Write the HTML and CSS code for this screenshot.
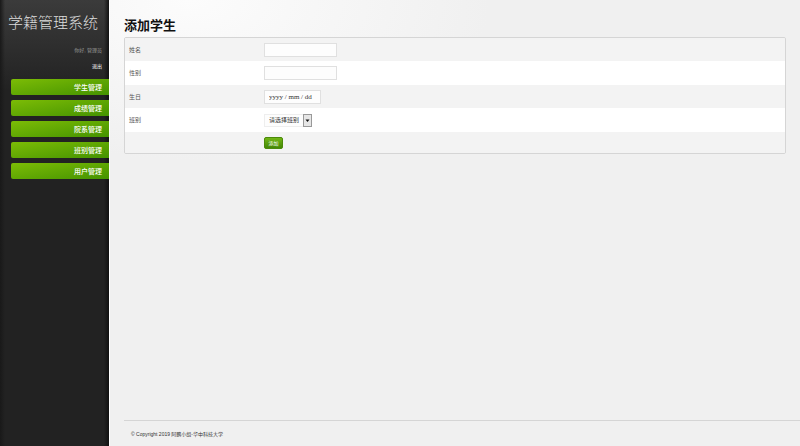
FILE: index.html
```
<!DOCTYPE html>
<html lang="zh-CN">
<head>
    <meta charset="UTF-8">
    <meta name="viewport" content="width=device-width, initial-scale=1.0">
    <title>学籍管理系统</title>
    <link rel="stylesheet" href="styles.css">
</head>
<body>
    <div class="page">
        <aside class="sidebar">
            <h1 class="logo">学籍管理系统</h1>
            <p class="hello">你好, 管理员</p>
            <a class="logout" href="#">退出</a>
            <nav class="menu">
                <a href="#">学生管理</a>
                <a href="#">成绩管理</a>
                <a href="#">院系管理</a>
                <a href="#">班别管理</a>
                <a href="#">用户管理</a>
            </nav>
        </aside>
        <main class="content">
            <h2 class="title">添加学生</h2>
            <form class="box">
                <table class="formTable">
                    <tr>
                        <th><label for="name">姓名</label></th>
                        <td><input type="text" id="name" name="name" class="field"></td>
                    </tr>
                    <tr>
                        <th><label for="sex">性别</label></th>
                        <td><input type="text" id="sex" name="sex" class="field"></td>
                    </tr>
                    <tr>
                        <th><label for="birthday">生日</label></th>
                        <td><input type="text" id="birthday" name="birthday" class="field date" placeholder="yyyy / mm / dd"></td>
                    </tr>
                    <tr>
                        <th><label for="class">班别</label></th>
                        <td>
                            <div class="selectWrap">
                                <select id="class" name="class">
                                    <option>请选择班别</option>
                                </select>
                                <svg class="arrow" viewBox="0 0 9 13" aria-hidden="true">
                                    <rect x="0.5" y="0.5" width="8" height="12" fill="#e6e6e6" stroke="#999"/>
                                    <path d="M2.5 5.5h4l-2 2.5z" fill="#111"/>
                                </svg>
                            </div>
                        </td>
                    </tr>
                    <tr class="buttonRow">
                        <th></th>
                        <td><button type="submit" class="add">添加</button></td>
                    </tr>
                </table>
            </form>
            <footer class="footer">© Copyright 2019 阿鹏小组-华中科技大学</footer>
        </main>
    </div>
</body>
</html>
```
FILE: styles.css
```
*{
    box-sizing: border-box;
    font-family: "Liberation Sans", "Noto Sans CJK SC", sans-serif;
}
body{
    margin: 0;
    background-color: #f0f0f0;
}
.page{
    display: flex;
    min-height: 100vh;
}

/* sidebar */
.sidebar{
    display: flex;
    flex-direction: column;
    flex: none;
    width: 110px;
    padding: 12px 0 0 8px;
    border-right: 1px solid #fff;
    background: linear-gradient(90deg, #191919, transparent 5px, transparent 104px, #111), linear-gradient(#3b3b3b, #222 90px);
    text-align: right;
}
.logo{
    margin: 0;
    color: #ddd;
    font-size: 15px;
    font-weight: 300;
    line-height: 22px;
    text-align: left;
    white-space: nowrap;
}
.hello{
    margin: 12px 7px 0 0;
    color: #999;
    font-size: 5px;
    line-height: 8px;
}
.logout{
    margin: 8px 7px 0 0;
    color: #fff;
    font-size: 5px;
    line-height: 8px;
    text-decoration: none;
}
.menu{
    display: flex;
    flex-direction: column;
    gap: 5px;
    margin: 9px 0 0 3px;
}
.menu a{
    padding: 1px 7px 0 0;
    border-radius: 2px 0 0 2px;
    background: linear-gradient(170deg, #7cbc06, #459300);
    color: #fff;
    font-size: 7px;
    font-weight: 500;
    line-height: 15px;
    text-decoration: none;
}

/* content */
.content{
    display: flex;
    flex-direction: column;
    flex: 1;
    padding: 16px 0 0 14px;
    background: radial-gradient(ellipse 300px 160px at 80px 0, #fcfcfc, #f0f0f0);
}
.title{
    margin: 0 0 2px;
    color: #111;
    font-size: 13px;
    font-weight: 700;
    line-height: 19px;
}
.box{
    margin-right: 14px;
    border: 1px solid #d5d5d5;
    border-radius: 2px;
    overflow: hidden;
}
.formTable{
    width: 100%;
    border-collapse: collapse;
    table-layout: fixed;
}
.formTable tr{
    height: 23px;
    background-color: #f3f3f3;
}
.formTable tr:nth-child(even){
    height: 24px;
    background-color: #fff;
}
.formTable .buttonRow{
    height: 21px;
}
.formTable th{
    width: 139px;
    padding: 0 0 0 4px;
    color: #555;
    font-size: 6px;
    font-weight: 400;
    line-height: 10px;
    text-align: left;
}
.formTable td{
    padding: 0;
    font-size: 6px;
    line-height: 10px;
}
.field{
    display: block;
    width: 73px;
    height: 14px;
    padding: 0 4px;
    border: 1px solid #e0e0e0;
    background-color: #fdfdfd;
    color: #444;
    font-size: 6px;
}
.date{
    width: 57px;
    font-family: "Liberation Serif", serif;
    font-size: 7px;
}
.date::placeholder{
    color: #333;
    opacity: 1;
}
.selectWrap{
    display: grid;
    width: 48px;
    height: 13px;
}
.selectWrap select{
    grid-area: 1 / 1;
    padding: 0 10px 0 4px;
    border: 1px solid #eee;
    background-color: #fdfdfd;
    color: #333;
    font-size: 6px;
    appearance: none;
}
.arrow{
    grid-area: 1 / 1;
    justify-self: end;
    width: 9px;
    height: 13px;
    pointer-events: none;
}
.add{
    display: block;
    width: 19px;
    height: 12px;
    padding: 0;
    border: 1px solid #4b8a0a;
    border-radius: 2px;
    background: linear-gradient(#72b616, #438705);
    color: #fff;
    font-size: 5px;
    line-height: 10px;
}
.footer{
    margin-top: auto;
    padding: 9px 7px 7px;
    border-top: 1px solid #d5d5d5;
    color: #333;
    font-size: 5px;
    line-height: 9px;
}
```
